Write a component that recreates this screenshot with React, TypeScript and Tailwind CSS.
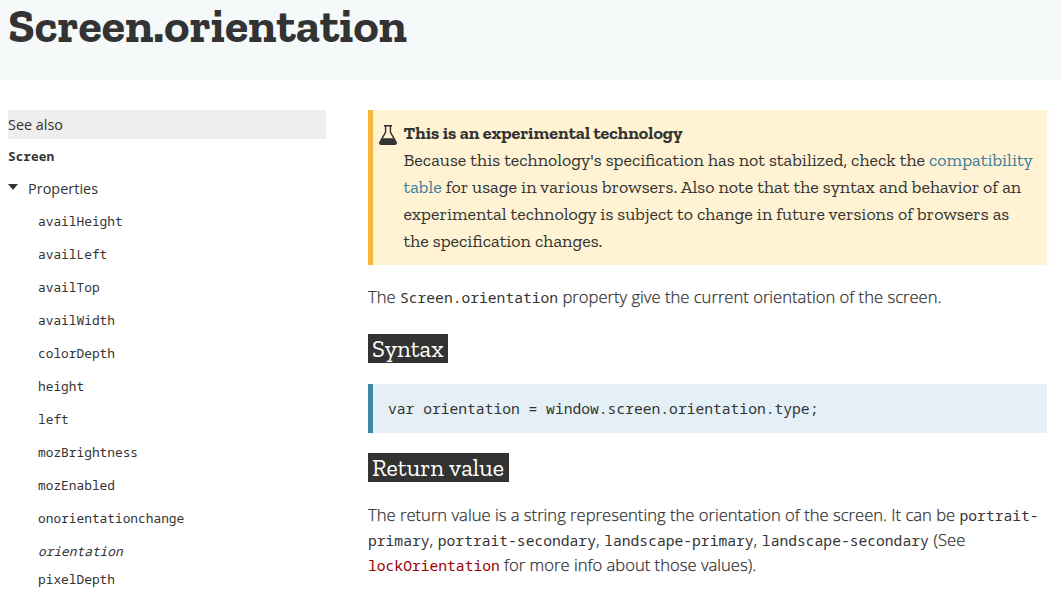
import type { ReactNode } from "react";

const properties = [
  "availHeight",
  "availLeft",
  "availTop",
  "availWidth",
  "colorDepth",
  "height",
  "left",
  "mozBrightness",
  "mozEnabled",
  "onorientationchange",
];

const Code = ({ children, className = "" }: { children: ReactNode; className?: string }) => (
  <code
    className={`font-['Noto_Sans_Mono','DejaVu_Sans_Mono',monospace] text-[14.65px] leading-none font-normal tracking-normal [-webkit-text-stroke:0] ${className}`}
  >
    {children}
  </code>
);

const Heading = ({ children }: { children: ReactNode }) => (
  <h2 className="flex h-[29px] w-fit items-center bg-[#333] pr-[4.5px] pl-1 font-['Zilla_Slab','DejaVu_Serif_Condensed',serif] text-2xl leading-none tracking-[0.02px] text-white">
    {children}
  </h2>
);

const Flask = () => (
  <svg viewBox="0 0 18 20" className="mt-[15px] h-5 w-[18px] shrink-0" fill="none">
    <path d="M5 .8h8" stroke="#333" strokeWidth="1.6" />
    <path
      d="M6.6 1v6.2L1 17.2c-.6 1.2 0 2 1 2h14c1 0 1.600-.8 1-2L11.400 7.200V1"
      stroke="#333"
      strokeWidth="1.4"
    />
    <path d="M3.600 13.300h10.800l2.800 4.700-.7 1.500H1.500L.8 18z" fill="#333" />
  </svg>
);

export default function App() {
  return (
    <div className="h-[595px] w-full overflow-hidden bg-white font-['Open_Sans',sans-serif] text-[#333]">
      <header className="h-20 bg-[#f5f9fa] pl-2">
        <h1 className="h-14 font-['Zilla_Slab','DejaVu_Serif_Condensed',serif] text-[48px] leading-[52px] font-bold">
          Screen.orientation
        </h1>
      </header>
      <div className="flex pt-[30px] pl-2">
        <nav className="w-[318px] shrink-0 text-[14.4px]">
          <div className="h-[29px] bg-[#eee] leading-[30px]">See also</div>
          <div className="h-[34px] font-['Noto_Sans_Mono','DejaVu_Sans_Mono',monospace] text-[12.8px] leading-[35px] font-bold">
            Screen
          </div>
          <div className="flex h-8 items-center">
            <svg viewBox="0 0 10 6" className="mr-[10px] mb-[5px] h-[6px] w-[10px]">
              <path d="M0 0h10L5 6z" fill="#333" />
            </svg>
            <span className="tracking-[0.05px]">Properties</span>
          </div>
          <ul className="pl-[30px] font-['Noto_Sans_Mono','DejaVu_Sans_Mono',monospace] text-[12.83px] leading-[33px]">
            {properties.map((name) => (
              <li key={name}>{name}</li>
            ))}
            <li className="italic">orientation</li>
            <li className="-mt-[5px]">pixelDepth</li>
          </ul>
        </nav>
        <main className="ml-[42px] w-[679px] shrink-0">
          <section className="flex h-[155px] border-l-[5px] border-[#f9b43b] bg-[#fff3d4] pl-[6px] font-['Zilla_Slab','DejaVu_Serif_Condensed',serif] text-[18px] leading-[27px]">
            <Flask />
            <div className="ml-[6.5px] pt-[10px] whitespace-nowrap">
              <strong className="block font-bold">This is an experimental technology</strong>
              <p>
                Because this technology's specification has not stabilized, check the{" "}
                <a className="text-[#3d7e9a]">compatibility</a>
                <br />
                <a className="text-[#3d7e9a]">table</a> for usage in various browsers. Also note that the syntax and
                behavior of an
                <br />
                experimental technology is subject to change in future versions of browsers as
                <br />
                the specification changes.
              </p>
            </div>
          </section>
          <p className="mt-[19px] h-[50px] text-[16.63px] leading-[25px] font-light whitespace-nowrap [-webkit-text-stroke:0.25px]">
            The <Code>Screen.orientation</Code> property give the current orientation of the screen.
          </p>
          <Heading>Syntax</Heading>
          <pre className="mt-[21px] h-[49px] border-l-[5px] border-[#3f87a6] bg-[#e4f0f5] pl-[15px] leading-[53px]">
            <Code>var orientation = window.screen.orientation.type;</Code>
          </pre>
          <div className="h-5" />
          <Heading>Return value</Heading>
          <p className="mt-5 text-[16.63px] leading-[25px] font-light whitespace-nowrap [-webkit-text-stroke:0.25px]">
            The return value is a string representing the orientation of the screen. It can be <Code>portrait-</Code>
            <br />
            <span className="[word-spacing:0.4px]">
              <Code>primary</Code>, <Code>portrait-secondary</Code>, <Code>landscape-primary</Code>,{" "}
              <Code>landscape-secondary</Code> (See
            </span>
            <br />
            <Code className="text-[#900]">lockOrientation</Code> for more info about those values).
          </p>
        </main>
      </div>
    </div>
  );
}
